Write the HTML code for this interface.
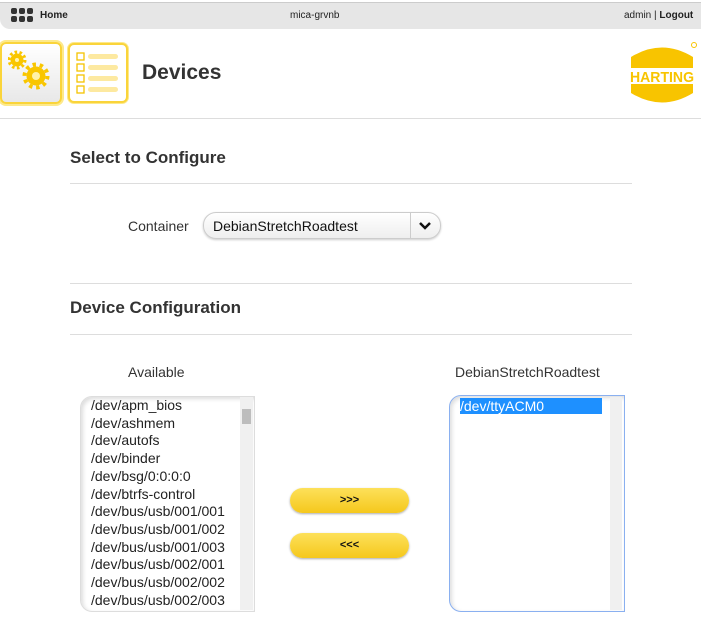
<!DOCTYPE html>
<html><head><style>
body{margin:0;width:701px;height:634px;background:#fff;font-family:"Liberation Sans",sans-serif;position:relative;overflow:hidden;color:#222}
.a{position:absolute}
.bar{left:0;top:2px;width:701px;height:26px;background:#e6e6e6;border-radius:0 0 0 10px;border-top:1px solid #ccc}
.dot{position:absolute;width:6px;height:6px;border-radius:2px;background:#333}
.hr{height:1px;background:#ddd}
h2{position:absolute;margin:0;font-size:17px;font-weight:bold;color:#333}
.list{background:#fff;border-radius:12px 0 0 12px;box-shadow:inset 2px 2px 4px #ddd;font-size:14px;line-height:17.7px}
.btn{width:119px;height:25px;border-radius:13px;background:linear-gradient(#fde15a,#f5c81c);box-shadow:0 1px 2px #aaa;font-size:11px;font-weight:bold;text-align:center;line-height:25px;color:#111}
</style></head><body>
<div class="a bar"></div>
<div class="a" style="left:11px;top:8px">
<div class="dot" style="left:0;top:0"></div><div class="dot" style="left:8px;top:0"></div><div class="dot" style="left:16px;top:0"></div>
<div class="dot" style="left:0;top:8px"></div><div class="dot" style="left:8px;top:8px"></div><div class="dot" style="left:16px;top:8px"></div></div>
<div class="a" style="left:40px;top:10px;font-size:10px;font-weight:bold">Home</div>
<div class="a" style="left:290px;top:10px;font-size:10px">mica-grvnb</div>
<div class="a" style="left:624px;top:10px;font-size:10px">admin | <b>Logout</b></div>

<div class="a" style="left:0;top:42px;width:58px;height:58px;border:2px solid #fad43a;border-radius:6px;background:linear-gradient(#fff,#e8e8e8);box-shadow:0 0 0 2px #fde98a"></div>
<svg class="a" style="left:8px;top:50px" width="44" height="40"><g fill="#f9c600"><circle cx="9" cy="10" r="6.5"/><circle cx="9" cy="10" r="8" fill="none" stroke="#f9c600" stroke-width="3" stroke-dasharray="2.6 2.4"/><circle cx="28" cy="26" r="9.5"/><circle cx="28" cy="26" r="11.5" fill="none" stroke="#f9c600" stroke-width="4" stroke-dasharray="3.4 3.8"/></g><circle cx="28" cy="26" r="4" fill="#fff2a8"/><circle cx="9" cy="10" r="2" fill="#fff3b0"/></svg>
<div class="a" style="left:68px;top:43px;width:56px;height:56px;border:2px solid #fad43a;border-radius:6px;background:#fff;box-shadow:0 0 0 1px #fde98a"></div>
<svg class="a" style="left:74px;top:50px" width="48" height="44"><g fill="none" stroke="#f5c400" stroke-width="1.3"><rect x="3" y="3" width="7" height="7"/><rect x="3" y="14" width="7" height="7"/><rect x="3" y="25" width="7" height="7"/><rect x="3" y="36" width="7" height="7"/></g><g fill="#fde9a0"><rect x="14" y="4" width="30" height="5" rx="2.5"/><rect x="14" y="15" width="30" height="5" rx="2.5"/><rect x="14" y="26" width="30" height="5" rx="2.5"/><rect x="14" y="37" width="30" height="5" rx="2.5"/></g></svg>
<div class="a" style="left:142px;top:61px;font-size:21px;font-weight:bold;color:#333">Devices</div>
<svg class="a" style="left:628px;top:40px" width="70" height="66"><path d="M3 17 Q34 -2 65 17 L65 28 L3 28Z M3 44 L65 44 L65 53 Q34 72 3 53Z" fill="#f8c400"/><text x="34" y="42" font-family="Liberation Sans" font-weight="bold" font-size="15" fill="#f8c400" text-anchor="middle" textLength="64" lengthAdjust="spacingAndGlyphs">HARTING</text><circle cx="66" cy="5" r="2.5" fill="none" stroke="#f8c400"/></svg>

<div class="a hr" style="left:0;top:118px;width:701px"></div>
<h2 style="left:70px;top:148px">Select to Configure</h2>
<div class="a hr" style="left:70px;top:183px;width:562px"></div>
<div class="a" style="left:128px;top:218px;font-size:14px;color:#333">Container</div>
<div class="a" style="left:203px;top:212px;width:236px;height:25px;border:1px solid #ccc;border-radius:13px;background:linear-gradient(#fff,#eee);box-shadow:0 1px 2px #ccc"></div>
<div class="a" style="left:213px;top:218px;font-size:14px;color:#111">DebianStretchRoadtest</div>
<div class="a" style="left:410px;top:213px;width:1px;height:25px;background:#ccc"></div>
<svg class="a" style="left:418px;top:220px" width="14" height="12"><path d="M2 3 L7 8 L12 3" fill="none" stroke="#111" stroke-width="2.5"/></svg>
<div class="a hr" style="left:70px;top:283px;width:562px"></div>
<h2 style="left:70px;top:298px">Device Configuration</h2>
<div class="a hr" style="left:70px;top:334px;width:562px"></div>
<div class="a" style="left:128px;top:364px;font-size:14px;color:#333">Available</div>
<div class="a" style="left:455px;top:364px;font-size:14px;color:#333">DebianStretchRoadtest</div>

<div class="a list" style="left:80px;top:396px;width:173px;height:214px;border:1px solid #ddd">
<div style="padding:0 0 0 10px;overflow:hidden;height:214px">/dev/apm_bios<br>/dev/ashmem<br>/dev/autofs<br>/dev/binder<br>/dev/bsg/0:0:0:0<br>/dev/btrfs-control<br>/dev/bus/usb/001/001<br>/dev/bus/usb/001/002<br>/dev/bus/usb/001/003<br>/dev/bus/usb/002/001<br>/dev/bus/usb/002/002<br>/dev/bus/usb/002/003</div></div>
<div class="a" style="left:240px;top:397px;width:13px;height:213px;background:#f0f0f0"></div>
<div class="a" style="left:242px;top:409px;width:9px;height:15px;background:#bdbdbd"></div>

<div class="a btn" style="left:290px;top:488px">&gt;&gt;&gt;</div>
<div class="a btn" style="left:290px;top:533px">&lt;&lt;&lt;</div>

<div class="a list" style="left:449px;top:395px;width:174px;height:215px;border:1px solid #8ab0f0">
<div style="margin:2px 0 0 10px;width:142px;background:#1e90ff;color:#fff;font-size:14px;line-height:16px">/dev/ttyACM0</div></div>
<div class="a" style="left:610px;top:397px;width:12px;height:213px;background:#f0f0f0"></div>
</body></html>
